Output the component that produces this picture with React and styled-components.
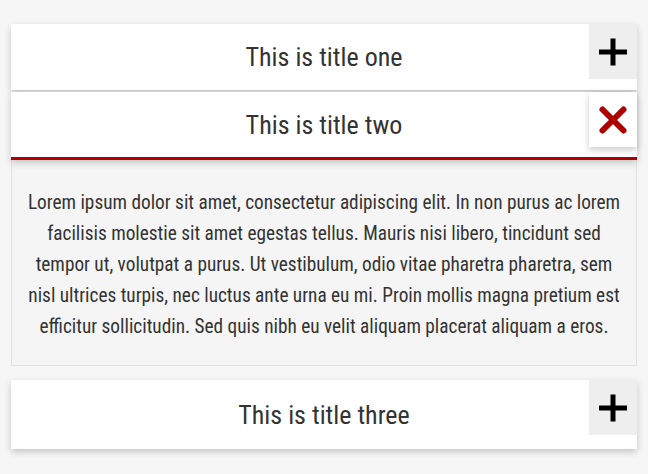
import React from "react";
import styled, { createGlobalStyle } from "styled-components";

const Global = createGlobalStyle`
  html, body { margin: 0; padding: 0; background: #f6f6f6; }
  body { font-family: "Roboto Condensed", "DejaVu Sans Condensed", Roboto, sans-serif; }
  * { box-sizing: border-box; }
`;

const Page = styled.div`
  padding: 24px 11px 20px 11px;
  display: flex;
  flex-direction: column;
`;

const Item = styled.section`
  display: flex;
  flex-direction: column;
  margin-bottom: ${(p) => p.$gap}px;
`;

const Header = styled.div`
  display: grid;
  grid-template-columns: 48px 1fr 48px;
  height: ${(p) => p.$h}px;
  background: #fff;
  box-shadow: 0 3px 7px rgba(0, 0, 0, 0.2);
  border-bottom: ${(p) => (p.$open ? "3px solid #ad0000" : "none")};
  position: relative;
  z-index: ${(p) => p.$z};
`;

const Title = styled.h2`
  grid-column: 2;
  margin: 0;
  align-self: center;
  text-align: center;
  font-weight: 400;
  font-size: 26px;
  color: #333;
`;

const IconBox = styled.div`
  grid-column: 3;
  align-self: start;
  height: 55px;
  display: flex;
  align-items: center;
  justify-content: center;
  background: ${(p) => (p.$open ? "#fff" : "#eeeeee")};
  box-shadow: ${(p) => (p.$open ? "0 3px 7px rgba(0,0,0,0.2)" : "none")};
`;

const Content = styled.div`
  background: #f5f5f5;
  border: 1px solid #e2e2e2;
  border-top: none;
  padding: 27px 14px 23px;
  text-align: center;
  font-size: 19.3px;
  line-height: 31px;
  color: #333;
`;

const Plus = () => (
  <svg width="30" height="30" viewBox="0 0 30 30">
    <path d="M15 1.5v27M1 15h28" stroke="#000" strokeWidth="5" strokeLinecap="butt" />
  </svg>
);

const Cross = () => (
  <svg width="30" height="30" viewBox="0 0 30 30">
    <path d="M4.5 4.5l21 21M25.5 4.5l-21 21" stroke="#ad0000" strokeWidth="6" strokeLinecap="round" />
  </svg>
);

const items = [
  { title: "This is title one", open: false, h: 66, gap: 2 },
  { title: "This is title two", open: true, h: 68, gap: 14 },
  { title: "This is title three", open: false, h: 69, gap: 0 },
];

const text =
  "Lorem ipsum dolor sit amet, consectetur adipiscing elit. In non purus ac lorem facilisis molestie sit amet egestas tellus. Mauris nisi libero, tincidunt sed tempor ut, volutpat a purus. Ut vestibulum, odio vitae pharetra pharetra, sem nisl ultrices turpis, nec luctus ante urna eu mi. Proin mollis magna pretium est efficitur sollicitudin. Sed quis nibh eu velit aliquam placerat aliquam a eros.";

export default function App() {
  return (
    <>
      <Global />
      <Page>
        {items.map((it, i) => (
          <Item key={i} $gap={it.gap}>
            <Header $h={it.h} $open={it.open} $z={i + 1}>
              <Title>{it.title}</Title>
              <IconBox $open={it.open}>{it.open ? <Cross /> : <Plus />}</IconBox>
            </Header>
            {it.open && <Content>{text}</Content>}
          </Item>
        ))}
      </Page>
    </>
  );
}
